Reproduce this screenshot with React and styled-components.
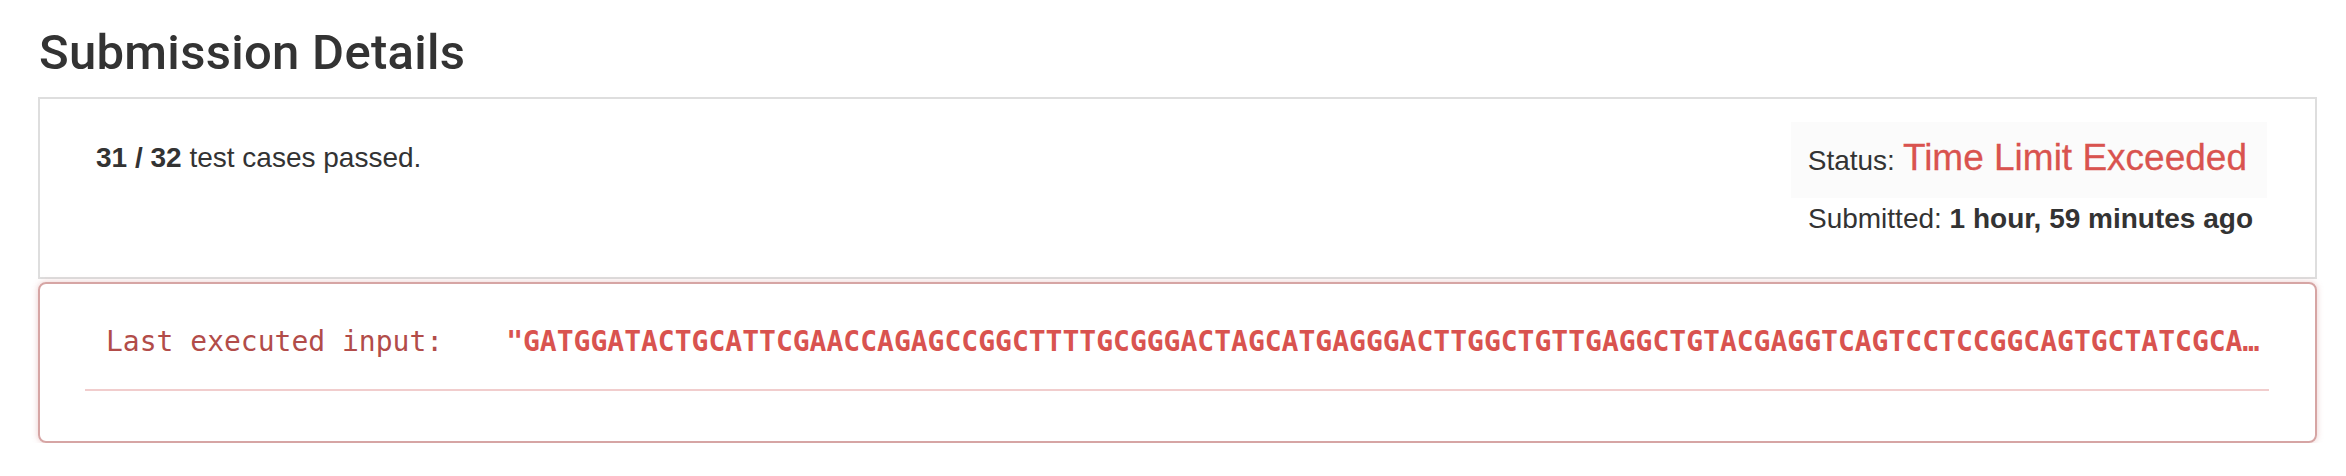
import React from 'react'
import styled, { createGlobalStyle } from 'styled-components'

const GlobalStyle = createGlobalStyle`
  body {
    margin: 0;
    background: #fff;
    font-family: "Liberation Sans", Arial, sans-serif;
    color: #333;
  }
`

const Page = styled.div`
  width: 2279px;
  padding: 26px 0 0 38px;
`

const Title = styled.h3`
  margin: 0 0 17px 1px;
  font-family: Roboto, "Liberation Sans", Arial, sans-serif;
  font-size: 49px;
  line-height: 54px;
  font-weight: 500;
  letter-spacing: 0.3px;
  color: #333;
`

const SummaryPanel = styled.div`
  display: flex;
  justify-content: space-between;
  align-items: flex-start;
  border: 2px solid #dedede;
  padding: 23px 48px 38px 56px;
`

const Passed = styled.p`
  margin: 16px 0 0;
  font-size: 28px;
  line-height: 40px;
`

const Right = styled.div`
  display: flex;
  flex-direction: column;
  align-items: flex-end;
`

const StatusBox = styled.div`
  display: flex;
  align-items: baseline;
  gap: 8px;
  background: #fbfbfb;
  padding: 16px 20px 17px 17px;
  font-size: 28px;
  line-height: 40px;
`

const StatusText = styled.span`
  font-size: 37px;
  color: #d9534f;
  -webkit-text-stroke: 0.3px #d9534f;
`

const Submitted = styled.div`
  margin: 1px 14px 0 0;
  font-size: 28px;
  line-height: 40px;
`

const ErrorPanel = styled.div`
  margin-top: 3px;
  border: 2px solid #d6a5a4;
  border-radius: 8px;
  box-shadow: 0 0 6px rgba(200, 110, 108, 0.35);
  padding: 38px 46px 50px 45px;
`

const InputRow = styled.div`
  display: flex;
  padding-left: 21px;
  font-family: "DejaVu Sans Mono", "Liberation Mono", monospace;
  font-size: 28px;
  line-height: 40px;
  white-space: pre;
`

const Label = styled.span`
  color: #b24c49;
  margin-right: 63px;
`

const Value = styled.span`
  color: #d9534f;
  font-weight: 700;
`

const Divider = styled.hr`
  margin: 27px 0 0;
  border: 0;
  border-top: 2px solid #f1cdcd;
`

const lastInput =
  '"GATGGATACTGCATTCGAACCAGAGCCGGCTTTTGCGGGACTAGCATGAGGGACTTGGCTGTTGAGGCTGTACGAGGTCAGTCCTCCGGCAGTGCTATCGCA…'

export default function App() {
  return (
    <>
      <GlobalStyle />
      <Page>
        <Title>Submission Details</Title>
        <SummaryPanel>
          <Passed>
            <b>31 / 32</b> test cases passed.
          </Passed>
          <Right>
            <StatusBox>
              Status:<StatusText>Time Limit Exceeded</StatusText>
            </StatusBox>
            <Submitted>
              Submitted: <b>1 hour, 59 minutes ago</b>
            </Submitted>
          </Right>
        </SummaryPanel>
        <ErrorPanel>
          <InputRow>
            <Label>Last executed input:</Label>
            <Value>{lastInput}</Value>
          </InputRow>
          <Divider />
        </ErrorPanel>
      </Page>
    </>
  )
}
